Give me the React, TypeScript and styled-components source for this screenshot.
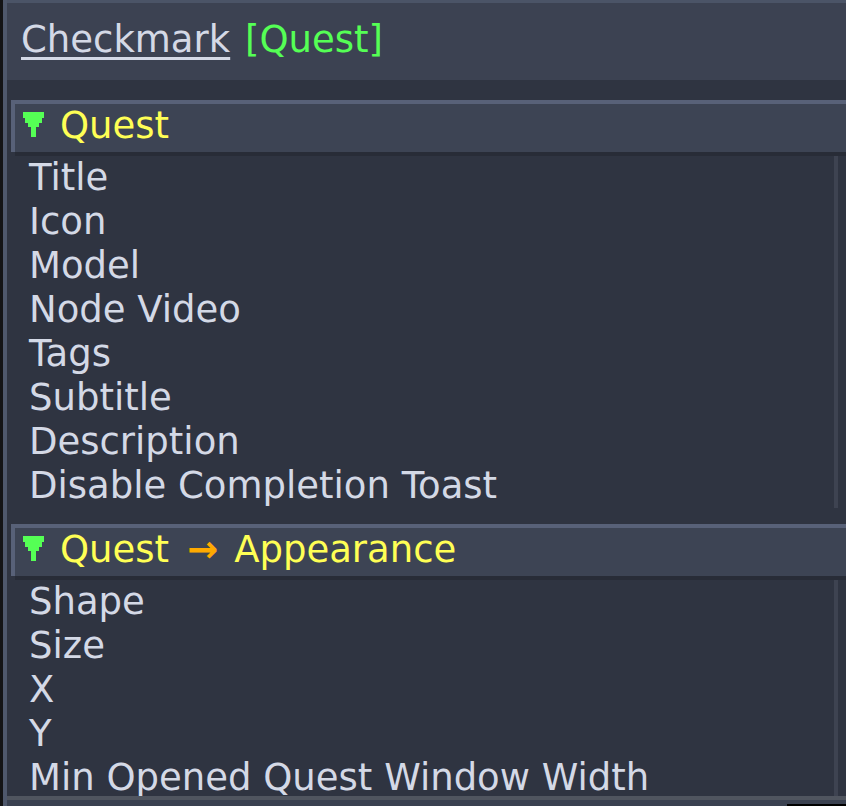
import styled, { createGlobalStyle } from "styled-components";

const GlobalStyle = createGlobalStyle`
  html, body {
    margin: 0;
    padding: 0;
    background: #2f3441;
    overflow: hidden;
  }
  * {
    box-sizing: border-box;
  }
`;

const questFields = [
  "Title",
  "Icon",
  "Model",
  "Node Video",
  "Tags",
  "Subtitle",
  "Description",
  "Disable Completion Toast",
];

const appearanceFields = ["Shape", "Size", "X", "Y", "Min Opened Quest Window Width"];

// little pixel funnel that marks an expanded group
const ExpandIcon = () => (
  <svg width="21" height="25" viewBox="0 0 21 25" shapeRendering="crispEdges">
    <rect x="0" y="0" width="21" height="6" fill="#55ff55" />
    <rect x="2" y="6" width="17" height="5" fill="#55ff55" />
    <rect x="5" y="11" width="11" height="4" fill="#55ff55" />
    <rect x="8" y="15" width="5" height="10" fill="#55ff55" />
  </svg>
);

type GroupProps = {
  path: string[];
  fields: string[];
};

const Group = ({ path, fields }: GroupProps) => {
  return (
    <StyledGroup>
      <GroupHeader>
        <ExpandIcon />
        <GroupTitle>
          {path.map((p, i) => (
            <span key={p}>
              {i > 0 && <PathArrow>→</PathArrow>}
              {p}
            </span>
          ))}
        </GroupTitle>
      </GroupHeader>
      <FieldList>
        <Fields>
          {fields.map((f) => (
            <Field key={f}>{f}</Field>
          ))}
        </Fields>
        <ScrollTrack />
      </FieldList>
    </StyledGroup>
  );
};

const App = () => {
  return (
    <>
      <GlobalStyle />
      <Screen>
        <Edge />
        <Frame>
          <TitleBar>
            <TitleName>Checkmark</TitleName> <TypeTag>[Quest]</TypeTag>
          </TitleBar>
          <Body>
            <Group path={["Quest"]} fields={questFields} />
            <Group path={["Quest", "Appearance"]} fields={appearanceFields} />
          </Body>
          <Footer>
            <FooterCorner />
          </Footer>
        </Frame>
      </Screen>
    </>
  );
};

const Screen = styled.div`
  display: flex;
  width: 846px;
  height: 806px;
  font-family: "DejaVu Sans", "Liberation Sans", sans-serif;
  font-size: 37px;
  color: #d4d9e6;
`;

const Edge = styled.div`
  width: 3px;
  background: #141416;
`;

const Frame = styled.div`
  flex: 1;
  display: flex;
  flex-direction: column;
  border-left: 4px solid #4f586c;
  min-width: 0;
`;

const TitleBar = styled.div`
  height: 80px;
  border-top: 3px solid #4b5467;
  background: #3c4252;
  padding: 15px 0 0 14px;
  line-height: 43px;
  white-space: pre;
`;

const TitleName = styled.span`
  text-decoration: underline;
  text-decoration-thickness: 3px;
  text-underline-offset: 5px;
`;

const TypeTag = styled.span`
  color: #55ff55;
  margin-left: 3px;
`;

const Body = styled.div`
  flex: 1;
  min-height: 0;
  overflow: hidden;
  display: flex;
  flex-direction: column;
  gap: 16px;
  padding: 20px 0 0 4px;
`;

const StyledGroup = styled.section`
  display: flex;
  flex-direction: column;
`;

const GroupHeader = styled.div`
  height: 52px;
  border-top: 4px solid #586178;
  border-left: 4px solid #586178;
  background: #3d4454;
  box-shadow: 4px 4px 0 #282c37;
  display: flex;
  align-items: flex-start;
  padding-left: 8px;
  svg {
    margin-top: 8px;
    flex-shrink: 0;
  }
`;

const GroupTitle = styled.div`
  margin-left: 16px;
  line-height: 43px;
  color: #ffff55;
  white-space: pre;
`;

const PathArrow = styled.span`
  display: inline-block;
  color: #ffaa00;
  font-weight: bold;
  margin: 0 16px 0 18px;
`;

const FieldList = styled.div`
  display: flex;
  margin-top: 4px;
`;

const Fields = styled.ul`
  flex: 1;
  list-style: none;
  margin: 0;
  padding: 0 0 0 18px;
`;

const Field = styled.li`
  height: 44px;
  line-height: 43px;
  white-space: nowrap;
`;

const ScrollTrack = styled.div`
  width: 4px;
  margin-right: 8px;
  background: #3e4351;
`;

const Footer = styled.div`
  height: 10px;
  border-top: 4px solid #50555f;
  background: #3a4150;
  display: flex;
  align-items: flex-end;
`;

const FooterCorner = styled.div`
  margin-left: auto;
  width: 59px;
  height: 2px;
  background: #000;
`;

export default App;
